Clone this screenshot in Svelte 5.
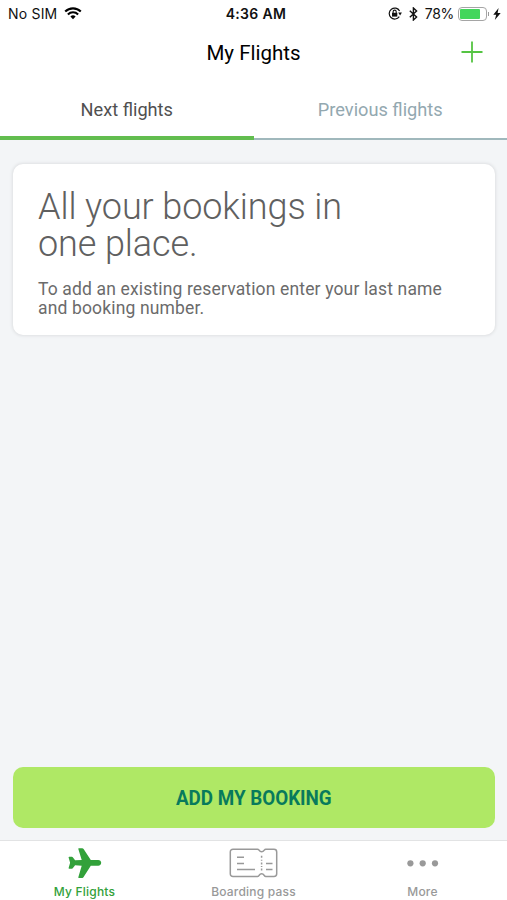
<script lang="ts">
	type Tab = 'next' | 'previous';

	let activeTab: Tab = $state('next');
	let activeNav = $state('flights');

	const batteryLevel = 78;

	const tabs: { id: Tab; label: string }[] = [
		{ id: 'next', label: 'Next flights' },
		{ id: 'previous', label: 'Previous flights' }
	];

	const navItems = [
		{ id: 'flights', label: 'My Flights' },
		{ id: 'pass', label: 'Boarding pass' },
		{ id: 'more', label: 'More' }
	];
</script>

<div class="screen">
	<div class="status-bar">
		<div class="carrier">
			<span class="carrier-name">No SIM</span>
			<svg width="18" height="13" viewBox="0 0 18 13" fill="none" stroke="#000" stroke-width="2.1">
				<path d="M1.2 4.6a11 11 0 0 1 15.6 0" />
				<path d="M3.9 7.4a7.2 7.2 0 0 1 10.2 0" />
				<path d="M6.4 9.5a3.7 3.7 0 0 1 5.2 0L9 12.2z" fill="#000" stroke="none" />
			</svg>
		</div>
		<span class="time">4:36 AM</span>
		<div class="indicators">
			<svg class="lock" width="14" height="13" viewBox="0 0 14 13" fill="none" stroke="#111">
				<path d="M11.6 4A5.5 5.5 0 1 0 11.3 9.600" stroke-width="1.2" />
				<path d="M10.200 5.600h3.700l-1.800 2.800z" fill="#111" stroke="none" />
				<rect x="4" y="5.800" width="5.300" height="3.800" fill="#111" stroke="none" />
				<path d="M5.100 6V4.700a1.550 1.550 0 0 1 3.100 0V6" stroke-width="1.100" />
			</svg>
			<svg class="bluetooth" width="9" height="14" viewBox="0 0 9 14" fill="none" stroke="#111" stroke-width="1.4">
				<path d="M.8 3.800l6.800 6.200-3.200 3V1l3.200 3L.8 10.200" />
			</svg>
			<span class="percent">{batteryLevel}%</span>
			<span class="battery">
				<span class="battery-fill" style="width: {batteryLevel}%"></span>
			</span>
			<span class="battery-tip"></span>
			<svg class="bolt" width="8" height="12" viewBox="0 0 8 12">
				<path d="M5.600 0L.3 6.700h2.900L1.800 12 7.700 5H4.600z" fill="#111" />
			</svg>
		</div>
	</div>

	<header class="title-bar">
		<h1>My Flights</h1>
		<button class="add" aria-label="Add booking">
			<svg width="22" height="22" viewBox="0 0 22 22" stroke="#55c443" stroke-width="1.8">
				<path d="M11 .5v21M.5 11h21" />
			</svg>
		</button>
	</header>

	<div class="tabs">
		{#each tabs as tab (tab.id)}
			<button class="tab {tab.id}" class:active={activeTab === tab.id} onclick={() => (activeTab = tab.id)}>
				<span>{tab.label}</span>
			</button>
		{/each}
	</div>

	<main>
		<section class="card">
			<h2>All your bookings in<br />one place.</h2>
			<p>To add an existing reservation enter your last name<br />and booking number.</p>
		</section>
		<button class="cta"><span>ADD MY BOOKING</span></button>
	</main>

	<nav>
		{#each navItems as item (item.id)}
			<button class="nav-item {item.id}" class:active={activeNav === item.id} onclick={() => (activeNav = item.id)}>
				{#if item.id === 'flights'}
					<svg width="34" height="32" viewBox="0 0 34 32" fill="currentColor">
						<path d="M11 1.2h3.2c.7 0 1 .3 1.4.9l7.2 10.8h7.4c1.8 0 3 1.2 3 2.9s-1.2 2.9-3 2.9h-7.4L15.6 30c-.4.6-.7.9-1.4.9H11c-.6 0-.8-.4-.6-1l3.3-11.2-6.6-.4-2.3 3c-.2.3-.5.5-.9.5H1.2c-.5 0-.7-.3-.6-.8l1.5-5.2L.6 10.5c-.1-.5.1-.8.6-.8h2.7c.4 0 .7.2.9.5l2.3 3.1 6.600-.4L10.400 2.200c-.2-.6 0-1 .6-1z" />
					</svg>
				{:else if item.id === 'pass'}
					<svg width="50" height="32" viewBox="0 0 50 32" fill="none" stroke="currentColor" stroke-width="1.5">
						<path d="M4 2.2h24.500c.7 0 1 .3 1.500.9 1.600 2.300 3.700 2.300 5.300 0 .4-.6.8-.9 1.500-.9H45c1.700 0 2.700 1 2.700 2.700v21.800c0 1.700-1 2.700-2.700 2.700h-8.200c-.7 0-1.100-.3-1.500-.9-1.600-2.300-3.700-2.300-5.300 0-.5.6-.8.9-1.500.9H4c-1.700 0-2.700-1-2.700-2.700V4.900c0-1.700 1-2.700 2.700-2.700z" />
						<path d="M8 10.300h7M8 16.400h7M8 22.400h18M37 16.400h6.500M37 22.400h6.500" />
						<path d="M32.600 8.800v2M32.600 12.800v1M32.600 15.400v2M32.600 19v1M32.600 21.600v2" />
					</svg>
				{:else}
					<svg width="32" height="32" viewBox="0 0 32 32" fill="currentColor">
						<circle cx="3.400" cy="16.300" r="3.100" />
						<circle cx="15.700" cy="16.300" r="3.100" />
						<circle cx="28" cy="16.300" r="3.100" />
					</svg>
				{/if}
				<span>{item.label}</span>
			</button>
		{/each}
	</nav>
</div>

<style>
	:global(body) {
		margin: 0;
	}

	.screen {
		display: flex;
		flex-direction: column;
		height: 900px;
		overflow: hidden;
		background: #fff;
		font-family: Roboto, 'Liberation Sans', sans-serif;
	}

	button {
		margin: 0;
		padding: 0;
		border: none;
		background: none;
		font-family: inherit;
		cursor: pointer;
	}

	svg {
		display: block;
		flex: none;
	}

	.status-bar {
		display: grid;
		grid-template-columns: 1fr auto 1fr;
		align-items: center;
		height: 27px;
		padding: 0 6px 0 8px;
		font-family: Inter, 'Liberation Sans', sans-serif;
		font-size: 14px;
		color: #111;
	}

	.carrier {
		display: flex;
		align-items: center;
		gap: 7px;
	}

	.carrier-name {
		letter-spacing: 0.2px;
	}

	.time {
		margin-left: 3px;
		font-weight: 600;
		letter-spacing: 0.35px;
	}

	.indicators {
		display: flex;
		align-items: center;
		justify-content: flex-end;
	}

	.lock {
		margin-right: 7px;
	}

	.bluetooth {
		margin-right: 7px;
	}

	.percent {
		margin-right: 4px;
		letter-spacing: -0.3px;
	}

	.battery {
		box-sizing: border-box;
		width: 29px;
		height: 14px;
		padding: 1px;
		border: 1px solid #a5a5a5;
		border-radius: 4px;
	}

	.battery-fill {
		display: block;
		height: 10px;
		border-radius: 1px;
		background: #43d65c;
	}

	.battery-tip {
		width: 1px;
		height: 4px;
		margin: 0 4px 0 1px;
		background: #999;
	}

	.title-bar {
		display: grid;
		grid-template-columns: 1fr auto 1fr;
		align-items: center;
		height: 50px;
		padding: 0 24px;
	}

	h1 {
		grid-column: 2;
		margin: 1px 0 0;
		font-size: 20.5px;
		font-weight: 400;
		color: #000;
	}

	.add {
		justify-self: end;
	}

	.tabs {
		display: flex;
		height: 63px;
	}

	.tab {
		box-sizing: border-box;
		flex: 1;
		padding-top: 4px;
		border-bottom: 2px solid #a0b8bc;
		font-size: 18.2px;
		color: #93a8b0;
	}

	.tab.active {
		padding-top: 6px;
		border-bottom: 4px solid #62bd4f;
		color: #505050;
	}

	main {
		display: flex;
		flex: 1;
		flex-direction: column;
		justify-content: space-between;
		padding: 24px 12px 12px 13px;
		background: #f3f5f7;
	}

	.card {
		box-sizing: border-box;
		height: 171px;
		padding: 25px 25px 0;
		border-radius: 10px;
		background: #fff;
		box-shadow: 0 0 3px 1px #dfe1e3;
	}

	h2 {
		margin: 0 0 17px;
		font-size: 36px;
		font-weight: 300;
		line-height: 37px;
		letter-spacing: -0.1px;
		color: #606060;
		white-space: nowrap;
	}

	p {
		margin: 0;
		font-size: 17.5px;
		line-height: 18.5px;
		letter-spacing: 0.15px;
		color: #6b6b6b;
		white-space: nowrap;
	}

	.cta {
		height: 61px;
		border-radius: 10px;
		background: #afe865;
		font-size: 20px;
		font-weight: 700;
		color: #087a5c;
	}

	.cta span {
		display: inline-block;
		transform: scaleX(0.94);
	}

	nav {
		display: grid;
		grid-template-columns: repeat(3, 1fr);
		height: 59px;
		border-top: 1px solid #e2e3e4;
		background: #fff;
	}

	.nav-item {
		display: flex;
		flex-direction: column;
		align-items: center;
		padding-top: 6px;
		font-family: Inter, 'Liberation Sans', sans-serif;
		font-size: 12px;
		font-weight: 500;
		line-height: 14px;
		letter-spacing: 0.2px;
		color: #999;
	}

	.nav-item.active {
		color: #32a13a;
	}

	.nav-item span {
		margin-top: 6px;
	}
</style>
